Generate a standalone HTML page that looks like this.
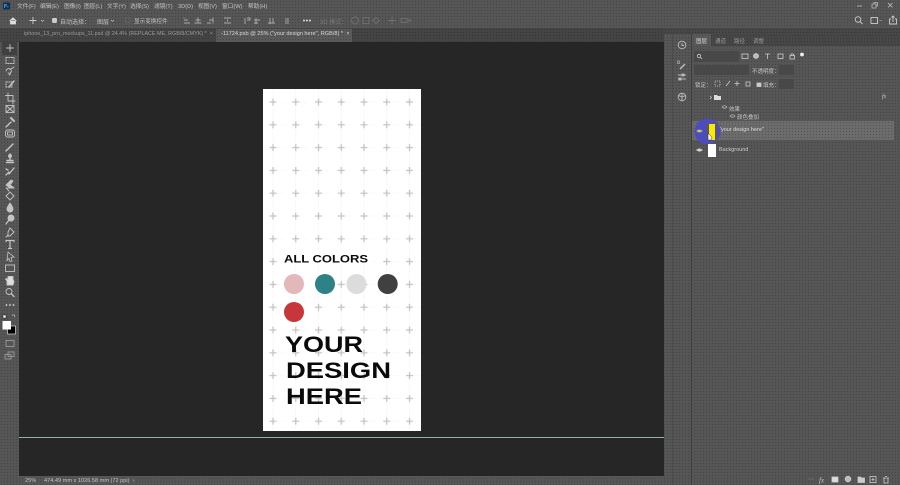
<!DOCTYPE html>
<html lang="zh"><head><meta charset="utf-8"><style>
html,body{margin:0;padding:0;background:#505050}
#p{position:relative;width:900px;height:485px;overflow:hidden;background-color:#565656;font-family:"Liberation Sans","Noto Sans CJK SC",sans-serif;color:#c4c4c4;font-size:5.5px}
.d{background-image:radial-gradient(rgba(0,0,0,.2) .7px,transparent .8px);background-size:3px 3px}
.a{position:absolute;white-space:nowrap}
.m{position:absolute;top:3px;font-size:5.7px;line-height:9px;white-space:nowrap}
svg{position:absolute;left:0;top:0}
</style></head><body>
<div id="p" class="d">
<div class="a" style="left:19px;top:42px;width:645px;height:434px;background:#2a2a2a;background-image:radial-gradient(rgba(0,0,0,.35) .7px,transparent .8px);background-size:2px 2px"></div>
<div class="a d" style="left:0;top:28px;width:664px;height:14px;background-color:#444"></div>
<div class="a d" style="left:664px;top:28px;width:236px;height:6px;background-color:#474747"></div>
<div class="a d" style="left:692px;top:34px;width:208px;height:12px;background-color:#474747"></div>
<div class="a d" style="left:692px;top:34px;width:19px;height:12px;background-color:#5a5a5a"></div>
<div class="a d" style="left:216px;top:29px;width:136px;height:13px;background-color:#5a5a5a"></div>
<div class="a d" style="left:692px;top:121px;width:202px;height:19px;background-color:#6c6c6c"></div>
<div class="a" style="left:691px;top:34px;width:1px;height:451px;background:#3c3c3c"></div>
<div class="a" style="left:672px;top:34px;width:1px;height:451px;background:#4c4c4c"></div>
<div class="a" style="left:19px;top:437px;width:645px;height:1px;background:#8fb0b0"></div>
<div class="a" style="left:263px;top:89px;width:158px;height:342px;background:#fff"></div>

<div class="m" style="left:17px">文件(F)</div><div class="m" style="left:40px">编辑(E)</div><div class="m" style="left:64px">图像(I)</div><div class="m" style="left:84px">图层(L)</div><div class="m" style="left:107px">文字(Y)</div><div class="m" style="left:130px">选择(S)</div><div class="m" style="left:154px">滤镜(T)</div><div class="m" style="left:178px">3D(D)</div><div class="m" style="left:198px">视图(V)</div><div class="m" style="left:222px">窗口(W)</div><div class="m" style="left:248px">帮助(H)</div>
<div class="a" style="left:60px;top:17px;font-size:6px">自动选择：</div>
<div class="a" style="left:97px;top:17px;font-size:6px">图层</div>
<div class="a" style="left:134px;top:17px;font-size:5.6px">显示变换控件</div>
<div class="a" style="left:320px;top:17px;font-size:6px;color:#777">3D 模式：</div>
<div class="a" style="left:24px;top:31px;color:#999;font-size:5.4px">iphone_13_pro_mockups_11.psd @ 24.4% (REPLACE ME, RGB/8/CMYK) * &nbsp;×</div>
<div class="a" style="left:221px;top:31px;color:#d8d8d8;font-size:5.6px">-11724.psb @ 25% ("your design here", RGB/8) * &nbsp;×</div>
<div class="a" style="left:25px;top:478px;font-size:5.6px">25%</div>
<div class="a" style="left:44px;top:478px;font-size:5.6px">474.49 mm x 1026.58 mm (72 ppi) &nbsp;›</div>

<div class="a" style="left:696px;top:37px;color:#ddd;font-size:5.5px">图层</div>
<div class="a" style="left:715px;top:37px;color:#999;font-size:5.5px">通道</div>
<div class="a" style="left:734px;top:37px;color:#999;font-size:5.5px">路径</div>
<div class="a" style="left:753px;top:37px;color:#999;font-size:5.5px">调整</div>
<div class="a" style="left:704px;top:54px;font-size:5.5px">类型</div>
<div class="a" style="left:699px;top:68px;font-size:5.5px">正常</div>
<div class="a" style="left:752px;top:67px;font-size:5.5px">不透明度：100%</div>
<div class="a" style="left:695px;top:81px;font-size:5.5px">锁定：</div>
<div class="a" style="left:763px;top:81px;font-size:5.5px">填充：100%</div>
<div class="a" style="left:729px;top:105px;font-size:5.5px">效果</div>
<div class="a" style="left:737px;top:113px;font-size:5.5px">颜色叠加</div>
<div class="a" style="left:719px;top:127px;font-size:5.5px;color:#ddd">"your design here"</div>
<div class="a" style="left:719px;top:147px;font-size:5.5px;color:#ccc">Background</div>
<div class="a" style="left:882px;top:94px;font-size:6px;font-style:italic;font-family:'Liberation Serif',serif;color:#ccc">fx</div>

<svg width="900" height="485" viewBox="0 0 900 485" fill="none">
<defs><pattern id="g" x="262" y="90.6" width="22.75" height="22.8" patternUnits="userSpaceOnUse">
<path d="M11 11.4h22.75M11 0V22.8" stroke="#e4e4e4" stroke-width=".6" stroke-dasharray="1 1.6"/>
<path d="M7.500 11.400H14.500M11 7.900V14.900" stroke="#c4c4c4" stroke-width="1.300"/>
</pattern></defs>
<rect x="263" y="89" width="158" height="342" fill="url(#g)"/>
<rect x="280" y="250" width="92" height="15" fill="#fff"/>
<circle cx="294" cy="284" r="10" fill="#e2b8ba"/><circle cx="325" cy="284" r="10" fill="#2e8285"/>
<circle cx="356.500" cy="284" r="10" fill="#dcdcdc"/><circle cx="387.700" cy="284" r="10" fill="#404040"/>
<circle cx="294" cy="312" r="10" fill="#c73639"/>
<g font-family="Liberation Sans" font-weight="700" fill="#0a0a0a">
<text x="284" y="262.600" font-size="11" textLength="84" lengthAdjust="spacingAndGlyphs">ALL COLORS</text>
<text x="285" y="352" font-size="22" textLength="78" lengthAdjust="spacingAndGlyphs">YOUR</text>
<text x="286" y="378" font-size="22" textLength="105" lengthAdjust="spacingAndGlyphs">DESIGN</text>
<text x="286" y="404" font-size="22" textLength="76" lengthAdjust="spacingAndGlyphs">HERE</text></g>

<rect x="3" y="2.500" width="7" height="7" fill="#0d2f52"/><path d="M4.500 8V4.500h1.500q1 0 0 1.500H5M7 7l1.500-.3" stroke="#4aa8e8" stroke-width=".8"/>
<g stroke="#bbb" stroke-width=".8"><path d="M857 6h5"/><path d="M872 4h4v4h-4zM874 4V2.500h3.500v3.500H876"/><path d="M888 3l4.500 4.500M892.500 3L888 7.500"/></g>
<path d="M9.500 21l3.500-3.200 3.500 3.200M10.500 20.500V24h5v-3.500" fill="#ddd" stroke="#ddd" stroke-width=".8"/>
<g stroke="#ccc" stroke-width=".9"><path d="M33 17v7M29.500 20.500h7"/><path d="M41 20l1.500 1.500L44 20" stroke-width=".6"/>
<rect x="52.500" y="18.500" width="4" height="4" fill="#ccc" stroke="#ccc" rx=".6"/>
<path d="M111 20l1.500 1.500L114 20" stroke-width=".6"/></g>
<rect x="125.500" y="18" width="4.500" height="4.500" stroke="#666" stroke-width=".7"/>
<g stroke="#aaa" stroke-width=".9">
<path d="M184 17.500v1M184 20h4M184 23h6M198 17.500v6M195.500 20h5M194.500 23h7M211 23h-4M209 20h4M213 17.500v6M224 18h7M224 23h7M227.500 19.500v2"/>
<path d="M245 18v6M247 18h3v2h-3M256 18v6M254 20h6M258 23h-4M270 18v6M273 18v5M268 23h7M286 18v6M288 18v6"/></g>
<g fill="#ddd"><circle cx="304" cy="20.500" r="1"/><circle cx="307" cy="20.500" r="1"/><circle cx="310" cy="20.500" r="1"/></g>
<g stroke="#707070" stroke-width=".9"><circle cx="355" cy="20.500" r="3.500"/><rect x="363" y="17.500" width="6" height="6"/><path d="M376 17.500l3.500 3-3.500 3-3.500-3zM392 16.500v8M388 20.500h8"/><rect x="401" y="18.500" width="6" height="4"/><path d="M408 19l3 1.500-3 1.500"/></g>
<g stroke="#ccc" stroke-width=".9"><circle cx="858" cy="19.500" r="2.800"/><path d="M860 21.500l2.500 2.500"/><rect x="871" y="17.500" width="6.500" height="6"/><path d="M879.500 20l1 1 1-1" stroke-width=".5"/><path d="M891 19h-1.500v5h7v-5H895M893 22v-6M891.500 17.500l1.500-1.500 1.500 1.500"/></g>
<rect x="2" y="42" width="15" height="13" fill="#404040"/>
<g stroke="#c4c4c4" stroke-width=".9" stroke-linecap="round">
<path d="M10 44.500v7M6.500 48h7"/>
<rect x="6" y="57.500" width="8" height="6" stroke-dasharray="1.500 1.200"/>
<path d="M6 71c1-3 4-3 5-1s-1 4-3 3M9 75l1.500-1M11 69l3-2"/>
<rect x="6" y="82" width="6" height="5" stroke-dasharray="1.500 1.200"/><path d="M9 87l5-6" stroke-width="1.400"/>
<path d="M8 93v8h7M5.500 95.500H13V104"/>
<rect x="6" y="105.500" width="8" height="7"/><path d="M6 105.500l8 7M14 105.500l-8 7"/>
<path d="M6 127l5-5" stroke-width="1.400"/><path d="M11 118l3 3" stroke-width="2"/>
<rect x="5.500" y="130" width="9" height="7" rx="2"/><rect x="7.500" y="132" width="5" height="3"/>
<path d="M6 151l7-7" stroke-width="1.500"/>
<path d="M6.500 162.500h7M7 160.500h6M10 154v6" stroke-width="1.400"/><circle cx="10" cy="156" r="1.500" fill="#c4c4c4"/>
<path d="M6 175l3-3M9 174l5-6M6 169l2 1" stroke-width="1.300"/>
<path d="M6 185l3 2h4l-3-2 3-4-2-1z" fill="#c4c4c4"/><path d="M6 188h8"/>
<path d="M6 196l4-4 4 4-4 4zM9 191l-2-2"/>
<path d="M10 203c2 3 3 4 3 6a3 3 0 0 1-6 0c0-2 1-3 3-6z" fill="#c4c4c4"/>
<circle cx="11" cy="218" r="3" fill="#c4c4c4"/><path d="M9 220l-3 4" stroke-width="1.300"/>
<path d="M10 228l4 4-4 4-2 0 0-4zM6 237l2-2"/>
<path d="M6 240.500h8M10 240.500v8M8.500 248.500h3M6 240.500v1M14 240.500v1" stroke-width="1.200"/>
<path d="M8 252l6 5-3 .5 1 3.500-2 .5-1-3-2 2z" stroke-width=".8"/>
<rect x="5.500" y="265" width="9" height="6.500"/>
<path d="M7 285v-4l-1.500-2 1-.5 1.500 1v-3h5v3l1 2-1 3.500z" fill="#dedede"/>
<circle cx="9" cy="291.500" r="3"/><path d="M11.500 294l2.500 2.500" stroke-width="1.300"/>
<rect x="6" y="340.500" width="8" height="6" stroke="#999"/>
<rect x="5" y="354.500" width="6" height="4.500" stroke="#999"/><rect x="8" y="352" width="6" height="4.500" stroke="#999"/>
</g>
<g fill="#ddd"><circle cx="6.500" cy="305" r=".9"/><circle cx="10" cy="305" r=".9"/><circle cx="13.500" cy="305" r=".9"/></g>
<rect x="3" y="315" width="3" height="3" fill="#fff" stroke="#111" stroke-width=".5"/>
<path d="M12 315h2l1 2" stroke="#ccc" stroke-width=".7"/>
<rect x="7.500" y="326" width="8" height="8" fill="#000" stroke="#ddd" stroke-width=".7"/>
<rect x="2.500" y="321" width="8.500" height="8.500" fill="#fff"/>
<g stroke="#bbb" stroke-width=".9"><circle cx="682" cy="45" r="3.800"/><path d="M682 43v2.500h2"/>
<path d="M680 69l5-5" stroke-width="1.500"/><rect x="677.500" y="61" width="2" height="2.500" stroke-width=".6"/>
<path d="M678 75h8M678 79h8" stroke-width="1"/><rect x="682" y="74" width="2" height="2" fill="#bbb"/><rect x="679" y="78" width="2" height="2" fill="#bbb"/>
<circle cx="682" cy="97" r="3.800"/><path d="M682 93v8M678.500 95.500l3.500 1.500 3.500-1.500"/></g>
<rect x="694" y="51" width="45" height="11" fill="#484848"/>
<rect x="694" y="65" width="55" height="10" fill="#484848"/><rect x="779" y="65" width="15" height="10" fill="#484848"/>
<rect x="779" y="79" width="15" height="10" fill="#484848"/>
<g stroke="#ccc" stroke-width=".8"><circle cx="699" cy="56" r="1.700"/><path d="M700.500 57.500l1.500 1.500"/>
<rect x="742" y="54" width="6" height="4.500"/><circle cx="756" cy="56" r="2.500" fill="#bbb"/><path d="M765 54h5M767.500 54v5"/><rect x="778" y="54" width="5" height="4.500"/><rect x="790" y="55.500" width="4.500" height="3.500"/><path d="M791 55.500v-1.500h2.500v1.500"/>
<rect x="715" y="81" width="5" height="5" stroke-dasharray="1 1"/><path d="M726 86l4-5"/><path d="M737 81v5M734.500 83.500h5"/><rect x="746" y="82" width="4" height="4"/><rect x="757" y="83" width="4" height="3.500" fill="#ccc"/></g>
<circle cx="802" cy="54.500" r="1.900" fill="#eee"/>
<path d="M710 96l1.500 1.500L710 99" stroke="#ccc" stroke-width=".7"/>
<path d="M714 95h3l1 1h3v4h-7z" fill="#ddd"/>
<circle cx="707.500" cy="131.500" r="13" fill="#4c4cbe"/>
<g stroke="#bbb" stroke-width=".7"><path d="M722 107q2.500-2.500 5 0q-2.500 2.500-5 0zM730 116q2.500-2.500 5 0q-2.500 2.500-5 0z"/>
<path d="M696.500 150q2.500-2.500 6 0q-3 2.500-6 0z" fill="#ddd"/></g>
<path d="M696.500 131q2.500-2.500 6 0q-3 2.500-6 0z" fill="#d8c840" stroke="#aa9" stroke-width=".5"/>
<rect x="707" y="123" width="10" height="18" fill="#5a5a5a"/>
<rect x="709" y="124" width="6" height="16" fill="#f5ea00"/>
<rect x="708" y="144" width="8" height="13" fill="#fff"/>
<path d="M708 134v6h3l1-2-1-2-1-1-1-1z" fill="#eee" stroke="#222" stroke-width=".4"/>
<g stroke="#707070" stroke-width=".8"><path d="M808 479h6"/></g>
<g stroke="#ccc" stroke-width=".8"><rect x="832" y="477" width="6" height="5" fill="#ddd"/>
<circle cx="848" cy="479" r="2.800" fill="#bbb"/><path d="M858 477h2.500l1 1h3v4.500H858z" fill="#ccc"/><rect x="870" y="476.500" width="6" height="6"/><path d="M873 478v3M871.500 479.500h3"/><path d="M883 478h6M884 478v5h4v-5M885 476.500h2"/></g>
<text x="819" y="482.500" fill="#ccc" font-size="7" font-style="italic" font-family="Liberation Serif">fx</text>
</svg>
</div>
</body></html>
